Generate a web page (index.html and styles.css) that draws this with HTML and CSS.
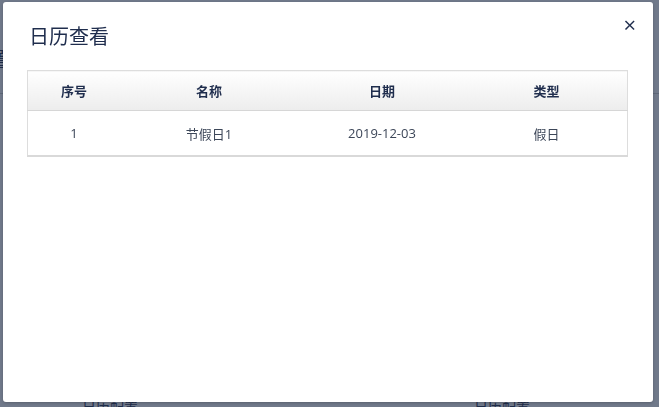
FILE: index.html
```html
<!DOCTYPE html>
<html>
	<head>
		<title>日历查看</title>
		<link rel="stylesheet" href="styles.css">
	</head>
	<body>
		<!-- 背景页面 -->
		<div class="page">
			<div class="page-title">日历配置</div>
			<div class="page-line"></div>
			<div class="page-links">
				<a class="page-link">日历配置</a>
				<a class="page-link">日历配置</a>
			</div>
		</div>
		<div class="mask"></div>

		<div class="modal">
			<div class="modal-header">
				<h3>日历查看</h3>
				<span class="close">&times;</span>
			</div>
			<div class="modal-body">
				<table class="grid">
					<thead>
						<tr>
							<th class="col-no">序号</th>
							<th class="col-name">名称</th>
							<th class="col-date">日期</th>
							<th>类型</th>
						</tr>
					</thead>
					<tbody>
						<tr>
							<td>1</td>
							<td>节假日1</td>
							<td>2019-12-03</td>
							<td>假日</td>
						</tr>
					</tbody>
				</table>
			</div>
		</div>
	</body>
</html>
```

FILE: styles.css
```css
html, body {
	margin: 0;
	padding: 0;
	height: 100%;
	overflow: hidden;
}

body {
	font-family: "Open Sans", "Noto Sans CJK SC", sans-serif;
	background: #fff;
	color: #1f2d4d;
}

.page {
	height: 100%;
	display: flex;
	flex-direction: column;
}

.page-title {
	margin: 44px 0 0 -70px;
	font-size: 20px;
	color: #1f2d4d;
}

.page-line {
	margin-top: 20px;
	border-top: 1px solid #ccc;
}

.page-links {
	margin-top: auto;
	margin-bottom: -9px;
	display: flex;
	padding-left: 82px;
	gap: 336px;
}

.page-link {
	font-size: 14px;
	line-height: 18px;
	color: #1f2d4d;
	text-decoration: underline;
}

.mask {
	position: fixed;
	inset: 0;
	background: rgba(32, 46, 72, 0.64);
}

.modal {
	position: absolute;
	left: 3px;
	top: 2px;
	width: 650px;
	height: 400px;
	background: #fff;
	border-radius: 3px;
	box-shadow: 0 1px 3px rgba(0, 0, 0, 0.2);
}

.modal-header {
	position: relative;
	padding: 17px 24px 0 26px;
}

.modal-header h3 {
	margin: 0;
	font-size: 20px;
	line-height: 36px;
	font-weight: normal;
	color: #1f2d4d;
}

.close {
	position: absolute;
	right: 17px;
	top: 7px;
	font-size: 22px;
	line-height: 30px;
	color: #1f2d4d;
}

.modal-body {
	padding: 15px 25px 0 24px;
}

.grid {
	width: 601px;
	table-layout: fixed;
	border-collapse: collapse;
	font-size: 13px;
	border: 1px solid #ddd;
	border-bottom: 2px solid #d9d9d9;
}

.grid th {
	height: 39px;
	padding: 0;
	font-weight: bold;
	color: #1f2d4d;
	background: linear-gradient(#fff, #ececec);
	border-bottom: 1px solid #d6d6d6;
}

.grid td {
	height: 44px;
	padding: 0;
	text-align: center;
	color: #3c4658;
}

.col-no {
	width: 92px;
}

.col-name {
	width: 178px;
}

.col-date {
	width: 168px;
}
```
